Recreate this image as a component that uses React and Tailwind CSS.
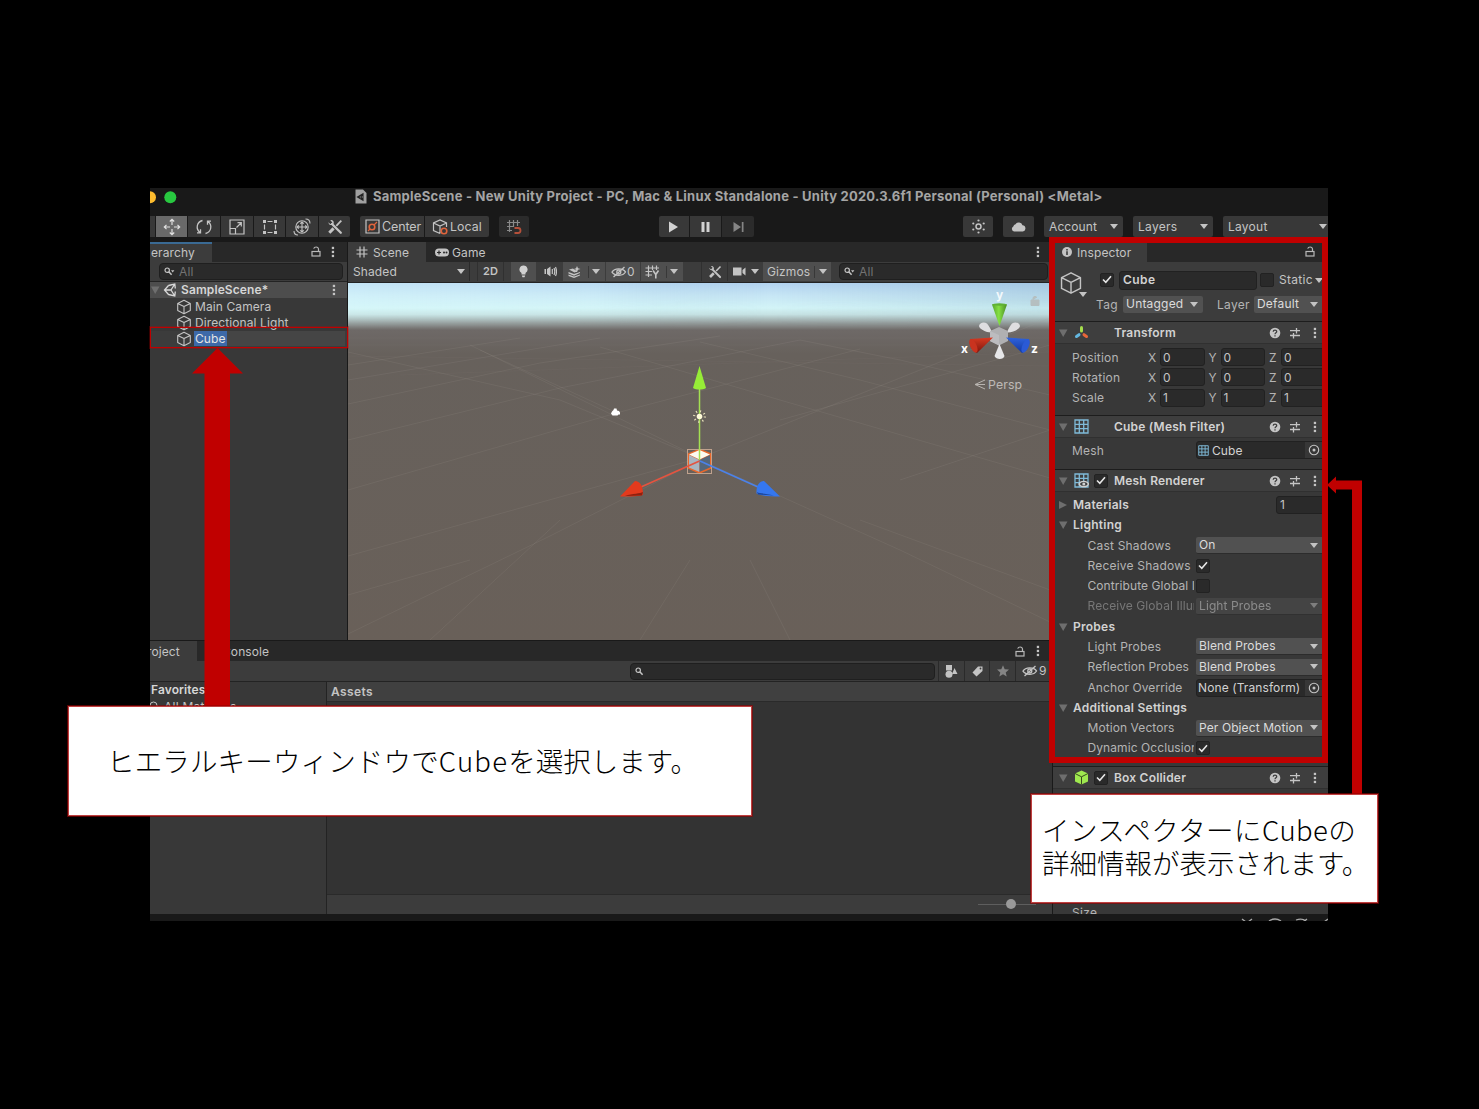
import React from "react";

const Caret = ({ className = "" }) => (
  <svg className={"shrink-0 " + className} width="8" height="5" viewBox="0 0 8 5"><path d="M0 0h8L4 5z" fill="#c4c4c4" /></svg>
);
const Fold = ({ closed }) => (
  <svg className="shrink-0" width="10" height="10" viewBox="0 0 10 10">
    <path d={closed ? "M1 1L9 5L1 9z" : "M1 1.5h8.500L5.200 9z"} fill="#6e6e6e" />
  </svg>
);
const Dots = ({ className = "" }) => (
  <svg className={"shrink-0 " + className} width="4" height="12" viewBox="0 0 4 12" fill="#c4c4c4">
    <rect x="0.800" y="0.800" width="2.300" height="2.300" /><rect x="0.800" y="4.800" width="2.300" height="2.300" /><rect x="0.800" y="8.800" width="2.300" height="2.300" />
  </svg>
);
const Lock = ({ className = "" }) => (
  <svg className={"shrink-0 " + className} width="10" height="11" viewBox="0 0 10 11" fill="none" stroke="#b8b8b8" strokeWidth="1.200">
    <rect x="1" y="5.500" width="8" height="4.500" /><path d="M7.500 5.500V3.300C7.500 1.800 6.500 1 5.200 1S3 1.700 2.700 2.600" />
  </svg>
);
const Search = ({ drop, className = "" }) => (
  <svg className={"shrink-0 " + className} width="11" height="9" viewBox="0 0 11 9" fill="none" stroke="#c4c4c4" strokeWidth="1.200">
    <circle cx="3.200" cy="3.200" r="2.200" /><path d="M4.800 4.800L7.600 7.800" strokeWidth="1.500" />
    {drop && <path d="M7 3.300h3.400L8.700 5.400z" fill="#c4c4c4" stroke="none" />}
  </svg>
);
const CubeIcon = ({ size = 16, className = "", stroke = 1.1 }) => (
  <svg className={"shrink-0 " + className} width={size} height={size} viewBox="0 0 16 16" fill="none" stroke="#c4c4c4" strokeWidth={stroke} strokeLinejoin="round">
    <path d="M8 1.200L14.300 4.400V11.600L8 14.800L1.700 11.600V4.400zM1.700 4.400L8 7.600L14.300 4.400M8 7.600V14.800" />
  </svg>
);
const Tools = ({ size = 16 }) => (
  <svg width={size} height={size} viewBox="0 0 16 16" fill="none" stroke="#c4c4c4">
    <path d="M5 5L13.800 13.800" strokeWidth="2.300" strokeLinecap="round" />
    <path d="M1.300 3.200L3.500 5.200L5.400 3.400L3.300 1.200C5.500 0.600 7.200 2.300 6.700 4.500C5 7 2 6.500 1.300 3.200z" fill="#c4c4c4" stroke="none" />
    <path d="M14.300 1.700L9.300 6.800" strokeWidth="1.800" /><path d="M6.600 9.400L2.300 13.700" strokeWidth="3" />
  </svg>
);
const HiddenEye = () => (
  <svg className="shrink-0" width="16" height="12" viewBox="0 0 16 12" fill="none" stroke="#c4c4c4" strokeWidth="1.300">
    <path d="M1 6.200C3.500 2 11.500 1.800 14.500 6C12 10.200 4 10.500 1 6.200z" /><circle cx="7.800" cy="6" r="2" /><path d="M2.500 11L13.500 1" />
  </svg>
);
const Help = () => (
  <svg className="shrink-0" width="12" height="12" viewBox="0 0 12 12"><circle cx="6" cy="6" r="5.300" fill="#c4c4c4" />
    <path d="M4.200 4.700C4.300 2.600 7.800 2.700 7.700 4.700C7.700 5.800 6.100 5.900 6 7.200M6 8.200V9.500" fill="none" stroke="#3e3e3e" strokeWidth="1.300" /></svg>
);
const Preset = () => (
  <svg className="shrink-0" width="12" height="12" viewBox="0 0 12 12" fill="none" stroke="#c4c4c4" strokeWidth="1.300">
    <path d="M1 3.700H7M7.500 1V6.500M7.500 3.700H11M1 8.500H4M4.500 6V11.500M4.500 8.500H11" />
  </svg>
);
const Grid = ({ size = 15, eye }) => (
  <svg className="shrink-0" width={size} height={size} viewBox="0 0 15 15" fill="none" stroke="#7fbbd9" strokeWidth="1.300">
    <path d="M1 1H14V14H1zM5.300 1V14M9.700 1V14M1 5.300H14M1 9.700H14" />
    {eye && <g><path d="M5 11C6.500 7.600 13 7.600 14.500 11C13 14.600 6.500 14.600 5 11z" fill="#3e3e3e" stroke="#d0d0d0" /><circle cx="9.800" cy="11" r="1.500" fill="#d0d0d0" stroke="none" /></g>}
  </svg>
);
const Check = ({ on = true, className = "" }) => (
  <span className={"flex h-[14px] w-[14px] shrink-0 items-center justify-center rounded-[2px] border border-[#222] bg-[#2a2a2a] " + className}>
    {on && <svg width="10" height="9" viewBox="0 0 10 9"><path d="M1 4.500L3.800 7.300L9 1.300" fill="none" stroke="#e6e6e6" strokeWidth="1.600" /></svg>}
  </span>
);

const ToolBtn = ({ children, className = "" }) => (
  <div className={"flex h-[21px] shrink-0 items-center justify-center bg-[#383838] " + className}>{children}</div>
);

function TitleBar() {
  return (
    <div className="flex h-[28px] shrink-0 items-start">
      <svg className="mt-[3px] shrink-0" width="28" height="13" viewBox="0 0 28 13"><circle cx="0" cy="6.300" r="6" fill="#fdbc2e" /><circle cx="20.300" cy="6.300" r="6" fill="#28c840" /></svg>
      <svg className="ml-[177px] mt-px shrink-0" width="12" height="15" viewBox="0 0 12 15"><path d="M0.500 0.500H8L11.500 4V14.500H0.500z" fill="#a0a0a0" />
        <path d="M2.500 8L8 4.800V11.200zM2.500 8H6L8 4.800M6 8L8 11.200" fill="none" stroke="#222" strokeWidth="1.100" /></svg>
      <span className="ml-[6px] mt-px text-[13px] font-bold leading-[15px] tracking-[0.230px] text-[#a5a5a5]">SampleScene - New Unity Project - PC, Mac &amp; Linux Standalone - Unity 2020.3.6f1 Personal (Personal) &lt;Metal&gt;</span>
    </div>
  );
}

function MainToolbar() {
  return (
    <div className="flex h-[26px] shrink-0 items-start">
      <ToolBtn className="w-[5px]" />
      <ToolBtn className="ml-px w-[31px] !bg-[#696969]">
        <svg width="18" height="18" viewBox="0 0 18 18" fill="none" stroke="#e0e0e0" strokeWidth="1.200"><path d="M9 1.500V7M9 11V16.500M1.500 9H7M11 9H16.500M6.800 3.500L9 1.300L11.200 3.500M6.800 14.500L9 16.700L11.200 14.500M3.500 6.800L1.300 9L3.500 11.200M14.500 6.800L16.700 9L14.500 11.200" /></svg>
      </ToolBtn>
      <ToolBtn className="ml-px w-[32px]">
        <svg width="18" height="18" viewBox="0 0 18 18" fill="none" stroke="#c4c4c4" strokeWidth="1.300"><path d="M7.500 2.500C1.500 4 0.500 11 5 14.500M2 14.800H5.500V11.300M10.500 15.500C16.500 14 17.500 7 13 3.500M16 3.200H12.500V6.700" /></svg>
      </ToolBtn>
      <ToolBtn className="ml-px w-[32px]">
        <svg width="16" height="16" viewBox="0 0 16 16" fill="none" stroke="#c4c4c4" strokeWidth="1.200"><path d="M1 1H15V15H1zM1 9.500H6.500V15M7.500 8.500L12 4M8.500 3.700H12.300V7.500" /></svg>
      </ToolBtn>
      <ToolBtn className="ml-px w-[31px]">
        <svg width="16" height="16" viewBox="0 0 16 16" fill="none" stroke="#c4c4c4" strokeWidth="1.200"><path d="M5.500 2.500H10.500M5.500 13.500H10.500M2.500 5.500V10.500M13.500 5.500V10.500" /><path d="M1 1H4V4H1zM12 1H15V4H12zM1 12H4V15H1zM12 12H15V15H12z" fill="#c4c4c4" stroke="none" /></svg>
      </ToolBtn>
      <ToolBtn className="ml-px w-[32px]">
        <svg width="18" height="18" viewBox="0 0 18 18" fill="none" stroke="#c4c4c4" strokeWidth="1.100"><circle cx="9" cy="9" r="6.200" /><path d="M9 4V14M4 9H14M7.300 5.700L9 4L10.700 5.700M7.300 12.300L9 14L10.700 12.300M5.700 7.300L4 9L5.700 10.700M12.300 7.300L14 9L12.300 10.700M1 13C1 15.500 2.500 17 5 17M12.500 1C15.500 1 17 2.500 17 5.500" /></svg>
      </ToolBtn>
      <ToolBtn className="ml-px w-[31px] rounded-r-[2px]"><Tools /></ToolBtn>
      <ToolBtn className="ml-[10px] w-[64px] !justify-start rounded-l-[2px]">
        <svg className="ml-[5px]" width="15" height="15" viewBox="0 0 15 15" fill="none" strokeWidth="1.200"><path d="M1 1H14V14H1z" stroke="#c4c4c4" /><circle cx="7" cy="8" r="2.800" stroke="#e0643c" strokeWidth="1.600" /><path d="M9 6L12 3M5 10L3 12" stroke="#e0643c" /></svg>
        <span className="ml-[2px] mt-px text-[12.500px] tracking-[-0.100px]">Center</span>
      </ToolBtn>
      <ToolBtn className="ml-px w-[64px] !justify-start rounded-r-[2px]">
        <svg className="ml-[7px]" width="17" height="16" viewBox="0 0 17 16" fill="none" strokeWidth="1.200"><path d="M8 14.500L1.500 11.500V4L8 1L14.500 4V8M1.500 4L8 7L14.500 4M8 7V14.500" stroke="#c4c4c4" /><circle cx="12" cy="12" r="2.800" stroke="#e0643c" strokeWidth="1.600" /></svg>
        <span className="ml-px mt-px text-[12.300px]">Local</span>
      </ToolBtn>
      <ToolBtn className="ml-[10px] w-[30px] rounded-[2px] !bg-[#2b2b2b]">
        <svg width="16" height="16" viewBox="0 0 16 16" fill="none" stroke="#8a8a8a" strokeWidth="1.200"><path d="M3.500 1V13M7.500 1V8M11.500 1V7M1 3.500H14M1 7.500H8M1 11.500H6" /><path d="M8.500 9H12A2.300 2.300 0 0 1 12 14H8.500" stroke="#b5503a" strokeWidth="1.800" /></svg>
      </ToolBtn>
      <ToolBtn className="ml-[130px] w-[30px] rounded-l-[2px]"><svg className="-ml-px" width="9" height="12" viewBox="0 0 9 12"><path d="M0 0.500L9 6L0 11.500z" fill="#d2d2d2" /></svg></ToolBtn>
      <ToolBtn className="ml-px w-[31px]"><svg width="9" height="12" viewBox="0 0 9 12"><path d="M0.500 1H3.500V11H0.500zM5.500 1H8.500V11H5.500z" fill="#d2d2d2" /></svg></ToolBtn>
      <ToolBtn className="ml-px w-[32px] rounded-r-[2px] !bg-[#2b2b2b]"><svg width="11" height="12" viewBox="0 0 11 12"><path d="M0.500 1L8 6L0.500 11zM8.800 1H10.500V11H8.800z" fill="#858585" /></svg></ToolBtn>
      <ToolBtn className="ml-[209px] w-[30px] rounded-[2px]">
        <svg width="15" height="15" viewBox="0 0 15 15" fill="none" stroke="#c4c4c4"><circle cx="7.500" cy="7.500" r="2.500" strokeWidth="1.500" /><g fill="#c4c4c4" stroke="none"><circle cx="7.500" cy="1.500" r="1.100" /><circle cx="7.500" cy="13.500" r="1.100" /><circle cx="2.300" cy="4.500" r="1.100" /><circle cx="12.700" cy="4.500" r="1.100" /><circle cx="2.300" cy="10.500" r="1.100" /><circle cx="12.700" cy="10.500" r="1.100" /></g></svg>
      </ToolBtn>
      <ToolBtn className="ml-[10px] w-[31px] rounded-[2px]">
        <svg width="15" height="11" viewBox="0 0 15 11"><path d="M3 10.500A2.700 2.700 0 0 1 2.300 5.500A3 3 0 0 1 4.500 3.200A4 4 0 0 1 11.500 4.200A3.200 3.200 0 0 1 12 10.500z" fill="#c4c4c4" /></svg>
      </ToolBtn>
      <ToolBtn className="ml-[10px] w-[79px] !justify-between rounded-[2px] pl-[5px] pr-[5px] text-[12px]"><span className="mt-px">Account</span><Caret /></ToolBtn>
      <ToolBtn className="ml-[10px] w-[80px] !justify-between rounded-[2px] pl-[5px] pr-[5px] text-[12px] tracking-[0.300px]"><span className="mt-px">Layers</span><Caret /></ToolBtn>
      <ToolBtn className="ml-[10px] w-[105px] !justify-between rounded-l-[2px] pl-[5px] pr-px text-[12px] tracking-[0.250px]"><span className="mt-px">Layout</span><Caret /></ToolBtn>
    </div>
  );
}

const TreeRow = ({ label }) => (
  <div className="flex h-[16.300px] items-center pl-[26px]"><CubeIcon className="mt-px" /><span className="ml-[3px] pt-px text-[12px]">{label}</span></div>
);

function Hierarchy() {
  return (
    <section className="flex w-[197px] shrink-0 flex-col bg-[#383838]">
      <div className="flex h-[20px] shrink-0 items-center bg-[#282828]">
        <div className="flex h-full w-[62px] items-center border-t-2 border-[#3a6a94] bg-[#3c3c3c] pb-px pl-px text-[12px]">erarchy</div>
        <Lock className="-mt-px ml-[99px]" /><Dots className="-mt-px ml-[10px]" />
      </div>
      <div className="flex h-[20px] shrink-0 items-center border-b border-[#232323] bg-[#3c3c3c] pl-[9px]">
        <div className="flex h-[17px] w-[184px] items-center rounded-[4px] border border-[#1f1f1f] bg-[#2a2a2a] pl-[4px]"><Search drop /><span className="ml-[4px] text-[12px] text-[#737373]">All</span></div>
      </div>
      <div className="flex h-[16px] shrink-0 items-center bg-[#4d4d4d]">
        <Fold />
        <svg className="ml-[3px] shrink-0" width="14" height="14" viewBox="0 0 14 14" fill="none" stroke="#d8d8d8" strokeWidth="1.300"><path d="M5.500 2.500L11.800 1L12.300 5.500M5.500 11.500L11.800 13L12.300 8.500M5.500 2.500L1.500 7L5.500 11.500M1.500 7H8M8 7L11.800 1M8 7L11.800 13" /></svg>
        <span className="ml-[4px] w-[88px] whitespace-nowrap text-[12px] font-semibold text-[#d6d6d6]">SampleScene*</span>
        <Dots className="ml-[63px]" />
      </div>
      <TreeRow label="Main Camera" />
      <TreeRow label="Directional Light" />
      <div className="flex h-[16.300px] items-center bg-[#3c3c3c] pl-[26px]">
        <CubeIcon />
        <div className="ml-[2px] flex h-[15px] w-[151px] items-center bg-[#454545]"><span className="flex h-full items-center bg-[#3d69a8] px-px pt-px text-[12px] text-[#e4e4e4]">Cube</span></div>
      </div>
    </section>
  );
}

function Viewport() {
  return (
    <svg className="block shrink-0" width="702" height="357" viewBox="348 283 702 357" fill="none">
      <defs>
        <linearGradient id="sky" x1="0" y1="283" x2="0" y2="640" gradientUnits="userSpaceOnUse">
          <stop offset="0" stopColor="#b3d3f0" /><stop offset="0.035" stopColor="#c7e6f5" /><stop offset="0.070" stopColor="#d3f4f7" /><stop offset="0.088" stopColor="#c6e2e3" />
          <stop offset="0.112" stopColor="#949c9b" /><stop offset="0.132" stopColor="#6e6967" /><stop offset="0.200" stopColor="#67615c" /><stop offset="1" stopColor="#696059" />
        </linearGradient>
        <linearGradient id="side" x1="348" y1="0" x2="1050" y2="0" gradientUnits="userSpaceOnUse">
          <stop offset="0" stopColor="#ddffff" stopOpacity="0.400" /><stop offset="0.350" stopColor="#ddffff" stopOpacity="0.200" /><stop offset="0.600" stopColor="#7aa6c0" stopOpacity="0" /><stop offset="1" stopColor="#6f9ab5" stopOpacity="0.220" />
        </linearGradient>
        <linearGradient id="fade" x1="0" y1="300" x2="0" y2="328" gradientUnits="userSpaceOnUse"><stop offset="0" stopColor="#fff" /><stop offset="1" stopColor="#000" /></linearGradient>
        <mask id="skyMask"><rect x="348" y="283" width="702" height="46" fill="url(#fade)" /></mask>
        <linearGradient id="cg" x1="0" x2="1"><stop offset="0" stopColor="#58a62c" /><stop offset="0.450" stopColor="#85e043" /><stop offset="1" stopColor="#4c8c26" /></linearGradient>
        <linearGradient id="cr" x1="0" x2="0" y1="0" y2="1"><stop offset="0" stopColor="#d83a22" /><stop offset="1" stopColor="#7c150c" /></linearGradient>
        <linearGradient id="cb" x1="0" x2="0" y1="0" y2="1"><stop offset="0" stopColor="#2f63dd" /><stop offset="1" stopColor="#1237a0" /></linearGradient>
      </defs>
      <rect x="348" y="283" width="702" height="357" fill="url(#sky)" />
      <rect x="348" y="283" width="702" height="46" fill="url(#side)" mask="url(#skyMask)" />
      <g stroke="#aaa39c" strokeOpacity="0.130">
        <path d="M348 556L700 458L1050 318M348 634L550 536L700 460M348 490L620 412L860 349M348 440L560 388L800 340M348 404L540 363L720 336M700 458L470 345M700 460L900 550L1050 622M860 520L1050 590M348 352L560 400L700 458M615 412L480 350M1050 478L780 400L600 347M1050 430L860 380L700 342M1050 395L900 360L800 340M780 420L1050 345M348 365L520 338M348 380L600 338M900 480L1050 430M348 595L470 560M430 640L560 520M640 640L690 560M790 640L750 560" />
        <path d="M348 345H1050M348 338H1050M400 375L1050 352M348 356L1050 366" strokeOpacity="0.050" />
      </g>
      <path d="M612 411.500L613.500 410L614 408.500H616.500L617 410.500L619 411L620 412.500V414.500H618.500L617.500 415.500H612.500L611 413.500z" fill="#fff" />
      <path d="M699.500 449.500L711 454V468L699.500 473L688.500 468V454z" fill="#e9682b" stroke="#e9682b" strokeWidth="1.500" />
      <path d="M699.500 450L710 454.500L699.500 459.500L689 454.500z" fill="#fbfaf0" /><path d="M689 455L699.500 460V472L689 467.500z" fill="#a9b5c0" /><path d="M710 455L699.500 460V472L710 467.500z" fill="#56677a" />
      <rect x="687.500" y="449.500" width="24" height="24" stroke="#c9a892" strokeOpacity="0.900" />
      <path d="M699.500 388V460" stroke="#a4e052" strokeWidth="1.500" />
      <path d="M699.500 366L706 388C703 390 696 390 693 388z" fill="#96ec37" />
      <path d="M699.500 461L641 487" stroke="#e45440" strokeWidth="1.700" /><path d="M620 496.500L635 481C640 481 643 486 643 494.500C641 496.500 630 496.500 620 496.500z" fill="#e33a1d" /><path d="M625 496C633 493 640 494 643 492L642 495.500z" fill="#8e2110" />
      <path d="M700 461L758 487" stroke="#4b82ea" strokeWidth="1.700" /><path d="M780 496.500L764 481C759 481 756 486 756.500 493.500C762 496 772 496.500 780 496.500z" fill="#3577ef" /><path d="M774 495.500C766 493 760 494 757 492L758 494.500z" fill="#1c479c" />
      <circle cx="699.500" cy="416.500" r="5.300" stroke="#ece5bd" strokeWidth="2.200" strokeDasharray="1 3.160" /><circle cx="699.500" cy="416.500" r="2.800" fill="#fffbd8" />
      <path d="M992 332.500C987 333 979 329 979 326C979.500 322.500 984 321.500 987 323.500C989 326 991 329 992 332.500zM1007 332.500C1012 333 1020 329 1020 326C1019.500 322.500 1015 321.500 1012 323.500C1010 326 1008 329 1007 332.500z" fill="#dedee0" />
      <path d="M999 327L1008 331V341L999 345.500L990 341V331z" fill="#b0b0b2" /><path d="M990 331L999 335V345.500L990 341z" fill="#bcbcbf" />
      <path d="M999.500 344L1004.500 356C1003.500 360 996 360 994.500 356z" fill="#e6e6e8" />
      <path d="M992 304.500H1007L999.500 326z" fill="url(#cg)" /><ellipse cx="999.500" cy="304.500" rx="7.500" ry="1.200" fill="#5fb134" />
      <path d="M993 337.500L970 339C968 344 972 351 977 353z" fill="url(#cr)" /><ellipse cx="973.500" cy="346" rx="3.200" ry="7.200" transform="rotate(-24 973.500 346)" fill="#c9331f" />
      <path d="M1006 337.500L1029 339C1031 344 1027 351 1022 353z" fill="url(#cb)" /><ellipse cx="1025.500" cy="346" rx="3.200" ry="7.200" transform="rotate(24 1025.500 346)" fill="#2a5ad6" />
      <g fill="#fff" fontFamily="Inter, sans-serif" fontSize="12" fontWeight="700"><text x="996" y="299" fillOpacity="0.850">y</text><text x="961" y="353">x</text><text x="1031" y="353">z</text></g>
      <path d="M1031 300H1039V305.500H1031zM1033 300V297.500Q1035 295 1037 297.500" fill="#b5bfc0" stroke="#b5bfc0" />
      <path d="M985 380L975 384.500L985 389M985 384.500H975" stroke="#b8b4b0" />
      <text x="988" y="388.500" fill="#bdb9b6" fontFamily="Inter, sans-serif" fontSize="12.300">Persp</text>
    </svg>
  );
}

const SBtn = ({ children, className = "" }) => <div className={"flex h-full shrink-0 items-center " + className}>{children}</div>;

function Scene() {
  return (
    <section className="flex w-[703px] shrink-0 flex-col border-l border-[#191919]">
      <div className="flex h-[20px] shrink-0 items-center bg-[#282828]">
        <div className="flex h-full w-[78px] items-center bg-[#3c3c3c] pl-[8px] text-[12px]">
          <svg width="12" height="12" viewBox="0 0 12 12" stroke="#c4c4c4" strokeWidth="1.200"><path d="M4 0.500V11.500M8 0.500V11.500M0.500 4H11.500M0.500 8H11.500" /></svg><span className="ml-[5px] pt-px">Scene</span>
        </div>
        <svg className="ml-[9px]" width="14" height="9" viewBox="0 0 14 9"><rect y="0.500" width="14" height="8" rx="4" fill="#c4c4c4" /><path d="M2 4.500H6M4 2.500V6.500" stroke="#282828" strokeWidth="1.200" /><circle cx="9" cy="4.500" r="1" fill="#282828" /><circle cx="11.500" cy="4.500" r="1" fill="#282828" /></svg>
        <span className="ml-[3px] w-[40px] pt-px text-[12px]">Game</span>
        <Dots className="-mt-px ml-[544px]" />
      </div>
      <div className="flex h-[21px] shrink-0 items-center border-b border-[#232323] bg-[#3c3c3c] pb-px text-[12px]">
        <SBtn className="w-[122px] justify-between border-r border-[#2a2a2a] pl-[5px] pr-[4px]">Shaded<Caret /></SBtn>
        <SBtn className="ml-[7px] w-[27px] justify-center border-x border-[#303030] !text-[11px] font-semibold !tracking-normal">2D</SBtn>
        <SBtn className="ml-[7px] w-[25px] justify-center bg-[#4f4f4f]"><svg width="9" height="13" viewBox="0 0 9 13" fill="#d0d0d0"><path d="M4.500 0.500A4 4 0 0 1 6.500 8V9.500H2.500V8A4 4 0 0 1 4.500 0.500zM2.800 10.500H6.200L5.500 12.300H3.500z" /></svg></SBtn>
        <SBtn className="ml-px w-[26px] justify-center"><svg width="13" height="11" viewBox="0 0 13 11" fill="none" stroke="#c4c4c4" strokeWidth="1.200"><path d="M0.500 3H2V8H0.500zM3 3L6.500 0.500V10.500L3 8z" fill="#c4c4c4" stroke="none" /><path d="M8.300 3V8M10 2Q11.500 5.500 10 9M11.500 1Q13.500 5.500 11.500 10" /></svg></SBtn>
        <SBtn className="w-[42px] bg-[#4f4f4f] pl-[5px]"><svg width="13" height="12" viewBox="0 0 13 12" fill="#c4c4c4"><path d="M1 3.500L5 2.500L7 4L10 5L6.500 6.500zM0.500 6L6 8L12 6V7L6 9.700L0.500 7.500zM0.500 8.500L6 10.500L12 8.500V9.500L6 12L0.500 10zM9 0L10 2.200L12.500 3L10 3.800L9 6L8 3.800L6 3L8 2.200z" /></svg><span className="ml-[7px] h-[12px] w-px bg-[#383838]" /><Caret className="ml-[3px]" /></SBtn>
        <SBtn className="ml-px w-[34px] bg-[#4f4f4f] pl-[5px]"><HiddenEye /><span className="text-[12px]">0</span></SBtn>
        <SBtn className="ml-px w-[42px] bg-[#4f4f4f] pl-[4px]"><svg width="15" height="14" viewBox="0 0 15 14" fill="none" stroke="#c4c4c4" strokeWidth="1.200"><path d="M3.500 0.500V12M7.500 0.500V5M11.500 0.500V5M0.500 3H14M0.500 6.500H7M0.500 10H7" /><path d="M8 5.500L10.800 9.500L13.500 5.500M10.800 9V13.500" strokeWidth="1.600" /></svg><span className="ml-[6px] h-[12px] w-px bg-[#383838]" /><Caret className="ml-[3px]" /></SBtn>
        <SBtn className="ml-[18px] w-[27px] justify-center border-x border-[#303030]"><Tools size={14} /></SBtn>
        <SBtn className="w-[34px] pl-[5px]"><svg width="13" height="9" viewBox="0 0 13 9" fill="#c4c4c4"><path d="M0 0.500H8.500V8.500H0zM9.500 3L12.500 0.500V8.500L9.500 6z" /></svg><Caret className="ml-[5px]" /></SBtn>
        <SBtn className="ml-px w-[68px] bg-[#4f4f4f] pl-[4px]">Gizmos<span className="ml-auto h-[12px] w-px bg-[#383838]" /><Caret className="ml-[4px] mr-[4px]" /></SBtn>
        <div className="ml-[8px] flex h-[17px] w-[209px] items-center rounded-[4px] border border-[#1f1f1f] bg-[#2a2a2a] pl-[4px]"><Search drop /><span className="ml-[4px] text-[12px] text-[#737373]">All</span></div>
      </div>
      <Viewport />
    </section>
  );
}

function Project() {
  const cell = "flex h-full w-[25.700px] shrink-0 items-center justify-center border-l border-[#2a2a2a]";
  return (
    <section className="flex h-[273px] shrink-0 flex-col bg-[#333]">
      <div className="flex h-[20px] shrink-0 items-center bg-[#282828] text-[12px]">
        <div className="flex h-full w-[47px] items-center bg-[#3c3c3c] pt-px"><span className="ml-[-3px]">roject</span></div>
        <span className="ml-[25px] mt-px w-[59px]">Console</span>
        <Lock className="ml-[734px]" /><Dots className="ml-[11px]" />
      </div>
      <div className="flex h-[21px] shrink-0 items-center border-b border-[#232323] bg-[#3c3c3c]">
        <div className="ml-[480px] mr-[3px] flex h-[17px] w-[305px] shrink-0 items-center rounded-[4px] border border-[#1f1f1f] bg-[#2a2a2a] pl-[4px]"><Search /></div>
        <div className={cell}><svg width="13" height="13" viewBox="0 0 13 13" fill="#c4c4c4"><path d="M1 0H7V5.500H1zM9.500 3L12.500 9H7z" /><circle cx="4" cy="9.300" r="3.500" /></svg></div>
        <div className={cell}><svg width="11" height="11" viewBox="0 0 11 11" fill="#c4c4c4"><path d="M6 0.500L10.500 0.500V5L4.500 10.500L0.500 6.500z" /><circle cx="8.500" cy="2.500" r="0.900" fill="#3c3c3c" /></svg></div>
        <div className={cell}><svg width="12" height="12" viewBox="0 0 12 12" fill="#858585"><path d="M6 0.300L7.700 4.300L12 4.600L8.700 7.400L9.700 11.600L6 9.300L2.300 11.600L3.300 7.400L0 4.600L4.300 4.300z" /></svg></div>
        <div className={cell + " !w-[34px] !justify-start pl-[6px]"}><HiddenEye /><span className="ml-px text-[12px]">9</span></div>
      </div>
      <div className="flex min-h-0 flex-1">
        <div className="flex w-[177px] shrink-0 flex-col border-r border-[#232323] bg-[#383838]">
          <span className="mt-[-1px] flex h-[17px] items-center pl-px text-[12px] font-semibold text-[#d6d6d6]">Favorites</span>
          <span className="flex h-[17px] items-center"><svg width="9" height="11" viewBox="0 0 9 11" fill="none" stroke="#c4c4c4"><circle cx="3.500" cy="4.500" r="3.500" /></svg><span className="ml-[5px] text-[12px] tracking-[0.250px]">All Materials</span></span>
        </div>
        <div className="flex flex-1 flex-col">
          <div className="flex h-[20px] items-center border-b border-[#2a2a2a] bg-[#404040] pl-[4px] pt-px text-[12px] font-semibold tracking-[0.400px]">Assets</div>
          <div className="flex-1" />
          <div className="flex h-[20px] items-center border-t border-[#2a2a2a] bg-[#3c3c3c] pb-px pl-[651px]">
            <div className="h-px w-[28px] bg-[#5e5e5e]" /><div className="h-[10px] w-[10px] rounded-full bg-[#999]" /><div className="h-px w-[20px] bg-[#5e5e5e]" />
          </div>
        </div>
      </div>
    </section>
  );
}

const CompHeader = ({ icon, check, title }) => (
  <div className="flex h-[23px] shrink-0 items-center border-b border-t border-b-[#303030] border-t-[#1d1d1d] bg-[#3e3e3e] pl-[5px]">
    <Fold /><span className="ml-[4px] flex w-[18px] justify-center">{icon}</span>
    <span className="ml-[4px] w-[20px]">{check && <Check />}</span>
    <span className="w-[155px] text-[12px] font-semibold tracking-[0.200px] text-[#d2d2d2]">{title}</span>
    <Help /><span className="w-[8px]" /><Preset /><span className="w-[12px]" /><Dots />
  </div>
);
const Field = ({ axis, value }) => (
  <><span className="w-[12px] shrink-0 pt-px text-[#b4b4b4]">{axis}</span><span className="mr-[4px] flex h-[18px] w-[44.500px] shrink-0 items-center rounded-[3px] border border-[#212121] bg-[#2a2a2a] pl-[2px] pt-px">{value}</span></>
);
const VecRow = ({ label, v }) => (
  <div className="flex h-[20.300px] shrink-0 items-center overflow-hidden pl-[19px] text-[12px]">
    <span className="w-[76px] shrink-0 pt-px tracking-[0.200px] text-[#b4b4b4]">{label}</span><Field axis="X" value={v} /><Field axis="Y" value={v} /><Field axis="Z" value={v} />
  </div>
);
const PropRow = ({ label, dim, tight, children }) => (
  <div className={"flex h-[20.270px] shrink-0 items-center overflow-hidden pl-[34.500px] text-[12px] " + (dim ? "opacity-50" : "")}>
    <span className={"mr-[2.500px] w-[106px] shrink-0 overflow-hidden whitespace-nowrap leading-[18px] text-[#b4b4b4] " + (tight ? "tracking-[0.080px]" : "tracking-[0.200px]")}>{label}</span>{children}
  </div>
);
const Drop = ({ children, className = "" }) => (
  <span className={"flex h-[17px] w-[130px] shrink-0 items-center rounded-[2px] border-b border-[#2c2c2c] bg-[#515151] pl-[3px] text-[12px] text-[#dcdcdc] " + className}><span className="w-[111px] whitespace-nowrap">{children}</span><Caret /></span>
);
const Group = ({ children, closed, extra }) => (
  <div className="flex h-[20.270px] shrink-0 items-center overflow-hidden pl-[5px] text-[12px] font-semibold tracking-[0.250px]"><Fold closed={closed} /><span className="ml-[5px] w-[203px] shrink-0 text-[#d2d2d2]">{children}</span>{extra}</div>
);
const Target = () => <svg className="shrink-0" width="12" height="12" viewBox="0 0 12 12" fill="none" stroke="#c4c4c4" strokeWidth="1.100"><circle cx="6" cy="6" r="4.700" /><circle cx="6" cy="6" r="1.500" fill="#c4c4c4" stroke="none" /></svg>;
const ObjField = ({ children }) => <span className="flex h-[18px] w-[130px] shrink-0 items-center rounded-[3px] border border-[#212121] bg-[#2a2a2a] pl-px text-[12px] text-[#d2d2d2]"><span className="flex w-[108px] items-center whitespace-nowrap">{children}</span><span className="flex h-full w-[20px] items-center bg-[#373737] pl-[3px]"><Target /></span></span>;

function Inspector() {
  return (
    <aside className="ml-px flex min-w-0 flex-1 flex-col overflow-hidden bg-[#383838]">
      <div className="flex h-[20px] shrink-0 items-center bg-[#282828]">
        <div className="flex h-full w-[94px] items-center bg-[#3c3c3c] pl-[9px] text-[12px]">
          <svg width="10" height="10" viewBox="0 0 10 10"><circle cx="5" cy="5" r="5" fill="#c4c4c4" /><path d="M5 2V3.500M5 4.300V8" stroke="#3c3c3c" strokeWidth="1.600" /></svg><span className="ml-[5px] pt-px">Inspector</span>
        </div>
        <Lock className="-mt-px ml-[158px]" />
      </div>
      <div className="flex h-[59px] shrink-0 bg-[#3c3c3c] pl-[6px] pt-[8px]">
        <div className="flex w-[40px] shrink-0 flex-col"><CubeIcon size={24} stroke={0.95} className="mt-px" /><Caret className="-mt-[3px] ml-[20px]" /></div>
        <div className="flex flex-col">
          <div className="flex h-[20px] items-center text-[12px]"><Check className="-mt-px ml-px" /><span className="ml-[5px] flex h-[19px] w-[138px] items-center rounded-[3px] border border-[#212121] bg-[#2a2a2a] pl-[3px] font-semibold tracking-[0.400px] text-[#d2d2d2]">Cube</span><Check on={false} className="ml-[3px]" /><span className="ml-[5px] tracking-[0.300px]">Static</span><Caret className="ml-[2px]" /></div>
          <div className="mt-[4px] flex h-[20px] items-center text-[12px]"><span className="ml-[-3px] w-[27px] pt-px tracking-[0.300px] text-[#b4b4b4]">Tag</span><span className="flex h-[17px] w-[80px] items-center justify-between rounded-[2px] bg-[#515151] pl-[3px] pr-[5px] tracking-[0.200px] text-[#dcdcdc]">Untagged<Caret /></span><span className="ml-[14px] w-[37px] pt-px tracking-[0.300px] text-[#b4b4b4]">Layer</span><span className="flex h-[17px] w-[72px] items-center rounded-[2px] bg-[#515151] pl-[3px] text-[#dcdcdc]"><span className="w-[53px] tracking-[0.200px]">Default</span><Caret /></span></div>
        </div>
      </div>
      <CompHeader title="Transform" icon={<svg width="15" height="15" viewBox="0 0 15 15" fill="none" strokeWidth="3" strokeLinecap="round"><path d="M7.500 2.500V6" stroke="#a5dd4c" /><path d="M5 9.700L2.500 11.500" stroke="#63b7e0" /><path d="M10 9.700L12.500 11.500" stroke="#e8673a" /></svg>} />
      <div className="flex h-[71px] shrink-0 flex-col pt-[3px]"><VecRow label="Position" v="0" /><VecRow label="Rotation" v="0" /><VecRow label="Scale" v="1" /></div>
      <CompHeader title="Cube (Mesh Filter)" icon={<Grid />} />
      <div className="flex h-[31px] shrink-0 items-start overflow-hidden pl-[19px] pt-[3px] text-[12px]"><span className="w-[124px] shrink-0 pt-px leading-[18px] tracking-[0.220px] text-[#b4b4b4]">Mesh</span><ObjField><Grid size={11} /><span className="ml-[3px] pt-px">Cube</span></ObjField></div>
      <CompHeader title="Mesh Renderer" check icon={<Grid eye />} />
      <div className="flex h-[274px] shrink-0 flex-col pt-[3px]">
        <Group closed extra={<span className="flex h-[18px] w-[60px] shrink-0 items-center rounded-[3px] border border-[#212121] bg-[#2a2a2a] pl-[3px] font-normal">1</span>}>Materials</Group>
        <Group>Lighting</Group>
        <PropRow label="Cast Shadows"><Drop>On</Drop></PropRow>
        <PropRow label="Receive Shadows"><Check /></PropRow>
        <PropRow label="Contribute Global Illumination" tight><Check on={false} /></PropRow>
        <PropRow label="Receive Global Illumination" dim tight><Drop>Light Probes</Drop></PropRow>
        <Group>Probes</Group>
        <PropRow label="Light Probes"><Drop>Blend Probes</Drop></PropRow>
        <PropRow label="Reflection Probes" tight><Drop>Blend Probes</Drop></PropRow>
        <PropRow label="Anchor Override" tight><ObjField>None (Transform)</ObjField></PropRow>
        <Group>Additional Settings</Group>
        <PropRow label="Motion Vectors" tight><Drop>Per Object Motion</Drop></PropRow>
        <PropRow label="Dynamic Occlusion" tight><Check /></PropRow>
      </div>
      <CompHeader title="Box Collider" check icon={<svg width="15" height="15" viewBox="0 0 15 15"><path d="M7.500 0.500L14 3.500V11.500L7.500 14.500L1 11.500V3.500z" fill="#9fe84f" /><path d="M1 3.500L7.500 6.800L14 3.500M7.500 6.800V14.500" fill="none" stroke="#37481f" /></svg>} />
      <div className="flex min-h-0 flex-1 flex-col justify-end overflow-hidden"><span className="-mb-[7px] pl-[19px] text-[12px] leading-[16px] tracking-[0.300px] text-[#b4b4b4]">Size</span></div>
    </aside>
  );
}

export default function App() {
  return (
    <div className="relative h-[1109px] w-[1479px] overflow-hidden bg-black pl-[150px] pt-[188px] font-['Inter',sans-serif] leading-none tracking-[0.100px] text-[#c4c4c4]">
      <main className="flex h-[733px] w-[1178px] flex-col overflow-hidden whitespace-nowrap bg-[#191919]">
        <TitleBar />
        <MainToolbar />
        <div className="flex h-[672px] shrink-0">
          <div className="flex w-[902px] shrink-0 flex-col">
            <div className="flex h-[398px] shrink-0"><Hierarchy /><Scene /></div>
            <div className="h-px shrink-0" />
            <Project />
          </div>
          <Inspector />
        </div>
        <div className="flex min-h-0 flex-1 overflow-hidden">
          <svg className="ml-[1090px]" width="88" height="8" viewBox="0 0 88 8" fill="none" stroke="#a8a8a8" strokeWidth="1.300"><path d="M2 5L6 8M12 5L8 8M29 7Q35 3 41 7M56 6Q62 4 66 7M67 5L63 8M84 8L88 5" /></svg>
        </div>
      </main>

      <div className="absolute left-[150px] top-[327px] h-[21px] w-[198px] border border-[#c00000] shadow-[0_0_0_1px_rgba(192,0,0,0.3)]" />
      <svg className="absolute left-[192px] top-[348px]" width="51" height="359" viewBox="0 0 51 359"><path d="M25.500 0L51 25.500H38V359H12.500V25.500H0z" fill="#c00000" /></svg>
      <div className="absolute left-[1049px] top-[237px] h-[526px] w-[279px] border-[6px] border-[#c00000]" />
      <svg className="absolute left-[1327px] top-[476px]" width="36" height="320" viewBox="0 0 36 320"><path d="M0 9L9 0.500V4.500H35V320H25V13.500H9V17.500z" fill="#c00000" /></svg>
      <div className="absolute left-[68px] top-[706px] flex h-[110px] w-[684px] items-center whitespace-nowrap border border-[#c04040] bg-white pl-[38px] font-['Noto_Sans_CJK_JP',sans-serif] text-[27.500px] font-light tracking-normal text-black shadow-[0_0_0_1px_rgba(150,0,0,0.6)]"><span><span className="tracking-[0.150px]">ヒエラルキーウィンドウで</span><span className="tracking-[1.200px]">Cube</span>を選択します。</span></div>
      <div className="absolute left-[1031px] top-[794px] flex h-[109px] w-[347px] flex-col justify-center whitespace-nowrap border border-[#c04040] bg-white pb-[6px] pl-[10px] font-['Noto_Sans_CJK_JP',sans-serif] text-[27.500px] font-light leading-[33px] tracking-normal text-black shadow-[0_0_0_1px_rgba(150,0,0,0.6)]"><span className="tracking-[0.450px]">インスペクターにCubeの</span><span>詳細情報が表示されます。</span></div>
    </div>
  );
}
